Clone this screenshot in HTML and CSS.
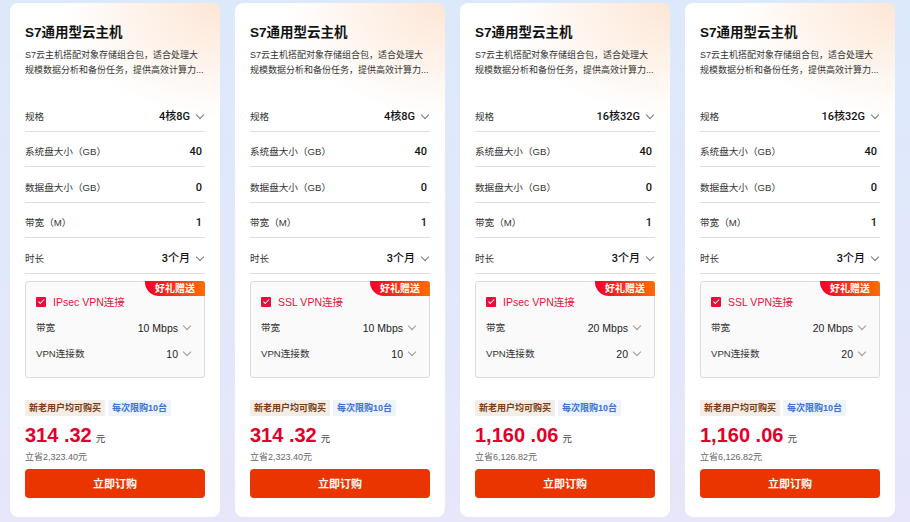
FILE: index.html
```html
<!DOCTYPE html>
<html>

<head>
    <meta charset="utf-8">
    <link rel="stylesheet" href="styles.css">
</head>

<body>
    <div class="cards">
        <div class="card">
            <h3 class="title">S7通用型云主机</h3>
            <p class="desc">S7云主机搭配对象存储组合包，适合处理大规模数据分析和备份任务，提供高效计算力...</p>
            <ul class="specs">
                <li><span>规格</span><b>4核8G<i class="arrow"></i></b></li>
                <li><span>系统盘大小（GB）</span><b class="num">40</b></li>
                <li><span>数据盘大小（GB）</span><b class="num">0</b></li>
                <li><span>带宽（M）</span><b class="num">1</b></li>
                <li><span>时长</span><b>3个月<i class="arrow"></i></b></li>
            </ul>
            <div class="vpn">
                <span class="gift">好礼赠送</span>
                <div class="vpn-check"><span class="box"></span>IPsec VPN连接</div>
                <div class="vpn-row"><span>带宽</span><span>10 Mbps<i class="arrow"></i></span></div>
                <div class="vpn-row"><span>VPN连接数</span><span>10<i class="arrow"></i></span></div>
            </div>
            <div class="tags"><span class="tag tag-user">新老用户均可购买</span><span class="tag tag-limit">每次限购10台</span></div>
            <div class="price">314 .32<small>元</small></div>
            <div class="save">立省2,323.40元</div>
            <button class="buy">立即订购</button>
        </div>

        <div class="card">
            <h3 class="title">S7通用型云主机</h3>
            <p class="desc">S7云主机搭配对象存储组合包，适合处理大规模数据分析和备份任务，提供高效计算力...</p>
            <ul class="specs">
                <li><span>规格</span><b>4核8G<i class="arrow"></i></b></li>
                <li><span>系统盘大小（GB）</span><b class="num">40</b></li>
                <li><span>数据盘大小（GB）</span><b class="num">0</b></li>
                <li><span>带宽（M）</span><b class="num">1</b></li>
                <li><span>时长</span><b>3个月<i class="arrow"></i></b></li>
            </ul>
            <div class="vpn">
                <span class="gift">好礼赠送</span>
                <div class="vpn-check"><span class="box"></span>SSL VPN连接</div>
                <div class="vpn-row"><span>带宽</span><span>10 Mbps<i class="arrow"></i></span></div>
                <div class="vpn-row"><span>VPN连接数</span><span>10<i class="arrow"></i></span></div>
            </div>
            <div class="tags"><span class="tag tag-user">新老用户均可购买</span><span class="tag tag-limit">每次限购10台</span></div>
            <div class="price">314 .32<small>元</small></div>
            <div class="save">立省2,323.40元</div>
            <button class="buy">立即订购</button>
        </div>

        <div class="card">
            <h3 class="title">S7通用型云主机</h3>
            <p class="desc">S7云主机搭配对象存储组合包，适合处理大规模数据分析和备份任务，提供高效计算力...</p>
            <ul class="specs">
                <li><span>规格</span><b>16核32G<i class="arrow"></i></b></li>
                <li><span>系统盘大小（GB）</span><b class="num">40</b></li>
                <li><span>数据盘大小（GB）</span><b class="num">0</b></li>
                <li><span>带宽（M）</span><b class="num">1</b></li>
                <li><span>时长</span><b>3个月<i class="arrow"></i></b></li>
            </ul>
            <div class="vpn">
                <span class="gift">好礼赠送</span>
                <div class="vpn-check"><span class="box"></span>IPsec VPN连接</div>
                <div class="vpn-row"><span>带宽</span><span>20 Mbps<i class="arrow"></i></span></div>
                <div class="vpn-row"><span>VPN连接数</span><span>20<i class="arrow"></i></span></div>
            </div>
            <div class="tags"><span class="tag tag-user">新老用户均可购买</span><span class="tag tag-limit">每次限购10台</span></div>
            <div class="price">1,160 .06<small>元</small></div>
            <div class="save">立省6,126.82元</div>
            <button class="buy">立即订购</button>
        </div>

        <div class="card">
            <h3 class="title">S7通用型云主机</h3>
            <p class="desc">S7云主机搭配对象存储组合包，适合处理大规模数据分析和备份任务，提供高效计算力...</p>
            <ul class="specs">
                <li><span>规格</span><b>16核32G<i class="arrow"></i></b></li>
                <li><span>系统盘大小（GB）</span><b class="num">40</b></li>
                <li><span>数据盘大小（GB）</span><b class="num">0</b></li>
                <li><span>带宽（M）</span><b class="num">1</b></li>
                <li><span>时长</span><b>3个月<i class="arrow"></i></b></li>
            </ul>
            <div class="vpn">
                <span class="gift">好礼赠送</span>
                <div class="vpn-check"><span class="box"></span>SSL VPN连接</div>
                <div class="vpn-row"><span>带宽</span><span>20 Mbps<i class="arrow"></i></span></div>
                <div class="vpn-row"><span>VPN连接数</span><span>20<i class="arrow"></i></span></div>
            </div>
            <div class="tags"><span class="tag tag-user">新老用户均可购买</span><span class="tag tag-limit">每次限购10台</span></div>
            <div class="price">1,160 .06<small>元</small></div>
            <div class="save">立省6,126.82元</div>
            <button class="buy">立即订购</button>
        </div>
    </div>
</body>

</html>
```

FILE: styles.css
```css
body {
    margin: 0;
    height: 522px;
    overflow: hidden;
    font-family: "Liberation Sans", "Noto Sans CJK SC", sans-serif;
    color: #222;
    background: linear-gradient(180deg, #dce9fb 0%, #e2e8fb 50%, #e7e6fb 100%);
}

.cards {
    display: flex;
    gap: 15px;
    padding: 3px 10px 0;
}

.card {
    flex-shrink: 0;
    width: 210px;
    height: 514px;
    box-sizing: border-box;
    padding: 22px 15px 0;
    border-radius: 8px;
    background:
        radial-gradient(ellipse 160px 115px at 100% 0, #fde6d5 0%, rgba(255, 255, 255, 0) 100%),
        #fff;
}

.title {
    margin: 0;
    font-size: 13.5px;
    line-height: 16px;
    font-weight: bold;
    color: #111;
}

.desc {
    margin: 7px -1px 0 0;
    font-size: 9px;
    line-height: 15px;
    color: #333;
}

.specs {
    list-style: none;
    margin: 18px 0 0;
    padding: 0;
}

.specs li {
    display: flex;
    justify-content: space-between;
    align-items: center;
    padding: 14.5px 0 8px;
    line-height: 12px;
    border-bottom: 1px solid #dedede;
    font-size: 9.6px;
    color: #333;
}

.specs b {
    display: flex;
    align-items: center;
    font-family: "Roboto", "Noto Sans CJK SC", sans-serif;
    font-size: 11px;
    font-weight: 500;
    color: #111;
}

.specs b.num {
    padding-right: 3px;
}

.arrow {
    display: inline-block;
    width: 5px;
    height: 5px;
    margin: -3px 2px 0 7px;
    border-right: 1px solid #777;
    border-bottom: 1px solid #777;
    transform: rotate(45deg);
}

.vpn {
    position: relative;
    margin-top: 7px;
    height: 97px;
    box-sizing: border-box;
    padding: 14px 12px 0 10px;
    border: 1px solid #dcdcdc;
    border-radius: 3px;
    background: #fafafa;
}

.gift {
    position: absolute;
    top: -1px;
    right: -1px;
    width: 60px;
    height: 15px;
    line-height: 15px;
    text-align: center;
    font-size: 10px;
    font-weight: bold;
    color: #fff;
    border-radius: 0 3px 0 14px;
    background: linear-gradient(90deg, #f2002d 0%, #ff6d00 100%);
}

.vpn-check {
    display: flex;
    align-items: center;
    font-size: 10.5px;
    line-height: 12px;
    color: #e5123a;
}

.box {
    position: relative;
    width: 10px;
    height: 10px;
    margin-right: 7px;
    border-radius: 1px;
    background: #e3103a;
}

.box::after {
    content: "";
    position: absolute;
    left: 3.5px;
    top: 1.5px;
    width: 2px;
    height: 4.5px;
    border-right: 1.3px solid #fff;
    border-bottom: 1.3px solid #fff;
    transform: rotate(45deg);
}

.vpn-row {
    display: flex;
    justify-content: space-between;
    align-items: center;
    margin-top: 14px;
    line-height: 12px;
    font-size: 9.6px;
    color: #333;
}

.vpn-row span:last-child {
    display: flex;
    align-items: center;
    font-size: 10.5px;
    color: #222;
}

.vpn-row .arrow {
    margin-left: 6px;
    border-color: #999;
}

.tags {
    display: flex;
    gap: 3px;
    margin-top: 22px;
}

.tag {
    height: 16px;
    line-height: 16px;
    padding: 0 4px;
    font-size: 9px;
    font-weight: bold;
    border-radius: 1px;
}

.tag-user {
    background: #f2ede6;
    color: #7a3b12;
}

.tag-limit {
    background: #eef3fc;
    color: #3a72d6;
}

.price {
    margin-top: 8px;
    font-size: 20px;
    line-height: 22px;
    font-weight: bold;
    color: #e2002b;
}

.price small {
    margin-left: 4px;
    font-size: 9.5px;
    font-weight: normal;
    color: #444;
}

.save {
    margin-top: 1px;
    font-size: 9px;
    line-height: 12px;
    color: #666;
}

.buy {
    display: block;
    width: 100%;
    height: 29px;
    margin-top: 6px;
    border: none;
    border-radius: 4px;
    background: #ea3500;
    color: #fff;
    font-family: inherit;
    font-size: 11px;
    font-weight: bold;
}
```
